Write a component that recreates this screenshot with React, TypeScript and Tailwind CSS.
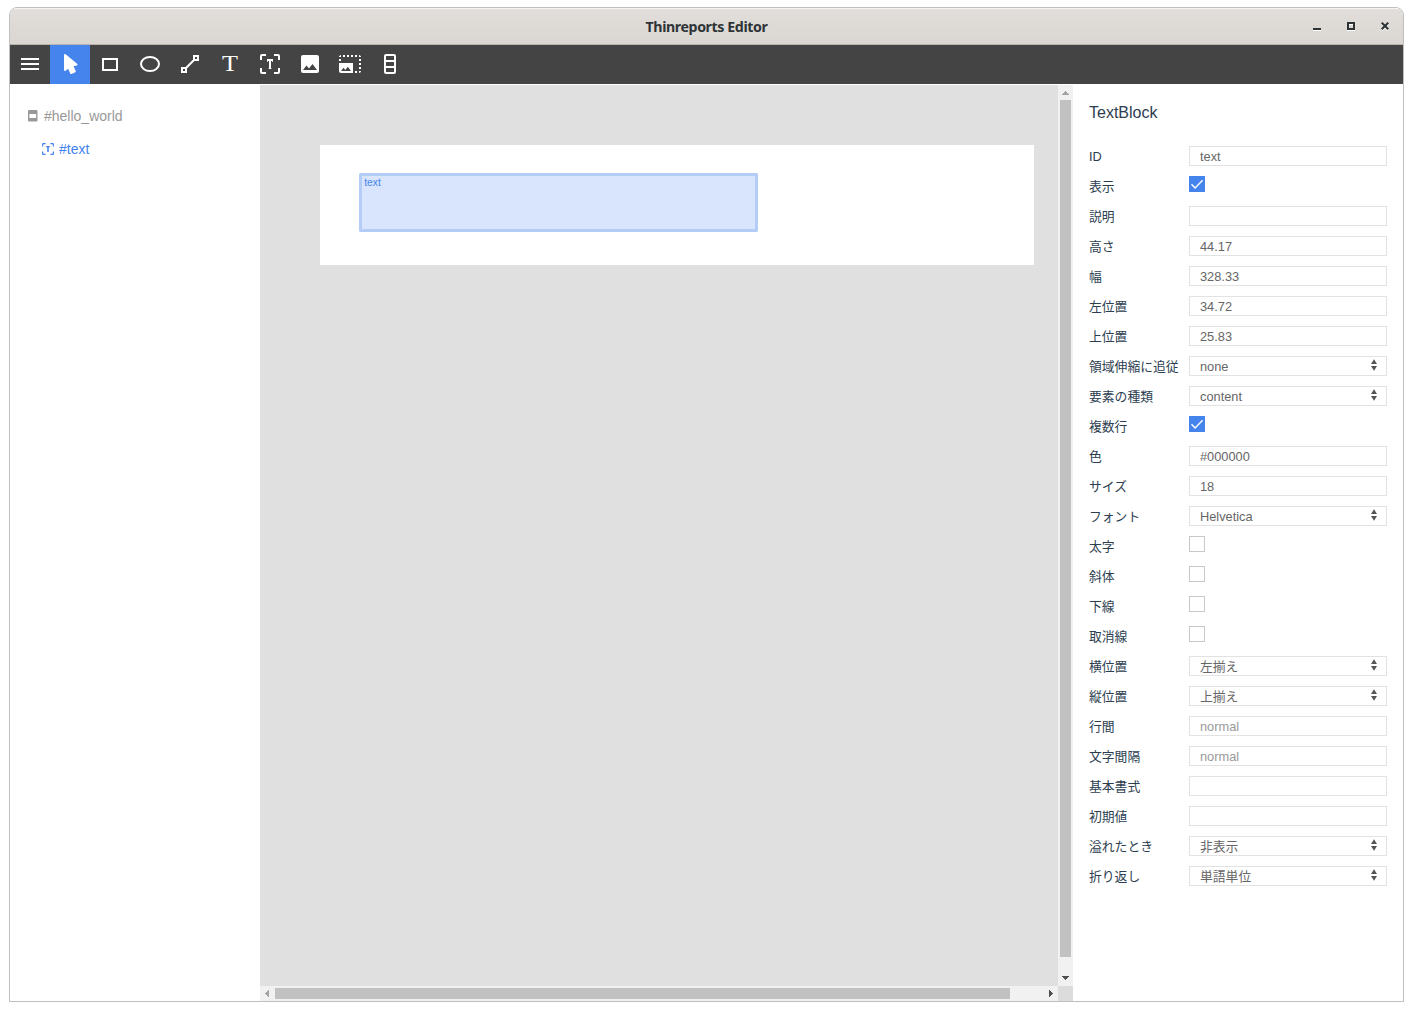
import type { ReactNode } from "react";

type Field = {
  label: string;
  kind: "text" | "select" | "check";
  value?: string;
  placeholder?: string;
  checked?: boolean;
};

const fields: Field[] = [
  { label: "ID", kind: "text", value: "text" },
  { label: "表示", kind: "check", checked: true },
  { label: "説明", kind: "text" },
  { label: "高さ", kind: "text", value: "44.17" },
  { label: "幅", kind: "text", value: "328.33" },
  { label: "左位置", kind: "text", value: "34.72" },
  { label: "上位置", kind: "text", value: "25.83" },
  { label: "領域伸縮に追従", kind: "select", value: "none" },
  { label: "要素の種類", kind: "select", value: "content" },
  { label: "複数行", kind: "check", checked: true },
  { label: "色", kind: "text", value: "#000000" },
  { label: "サイズ", kind: "text", value: "18" },
  { label: "フォント", kind: "select", value: "Helvetica" },
  { label: "太字", kind: "check" },
  { label: "斜体", kind: "check" },
  { label: "下線", kind: "check" },
  { label: "取消線", kind: "check" },
  { label: "横位置", kind: "select", value: "左揃え" },
  { label: "縦位置", kind: "select", value: "上揃え" },
  { label: "行間", kind: "text", placeholder: "normal" },
  { label: "文字間隔", kind: "text", placeholder: "normal" },
  { label: "基本書式", kind: "text" },
  { label: "初期値", kind: "text" },
  { label: "溢れたとき", kind: "select", value: "非表示" },
  { label: "折り返し", kind: "select", value: "単語単位" },
];

function Tool({ active, label, children }: { active?: boolean; label: string; children: ReactNode }) {
  return (
    <button aria-label={label} className={active ? "h-[39px] w-10 bg-[#4484ec]" : "h-[39px] w-10"}>
      <svg width="40" height="39" viewBox="0 0 40 39" fill="none" stroke="none">
        {children}
      </svg>
    </button>
  );
}

function Toolbar() {
  return (
    <div className="flex h-[39px] shrink-0 bg-[#444444]">
      <Tool label="Menu">
        <path fill="#fff" d="M11 13h18v2H11zM11 18h18v2H11zM11 23h18v2H11z" />
      </Tool>
      <Tool label="Select" active>
        <path
          fill="#fff"
          transform="translate(8 7)"
          d="M13.64,21.97C13.14,22.21 12.54,22 12.31,21.5L10.13,16.76L7.62,18.78C7.45,18.92 7.24,19 7,19A1,1 0 0,1 6,18V3A1,1 0 0,1 7,2C7.24,2 7.47,2.09 7.64,2.23L7.65,2.22L19.14,11.86C19.57,12.22 19.62,12.85 19.27,13.27C19.12,13.45 18.91,13.57 18.7,13.61L15.54,14.23L17.74,18.96C18,19.46 17.76,20.05 17.26,20.28L13.64,21.97Z"
        />
      </Tool>
      <Tool label="Rectangle">
        <rect x="13" y="14" width="14" height="11" stroke="#fff" strokeWidth="2" />
      </Tool>
      <Tool label="Ellipse">
        <ellipse cx="20" cy="19" rx="9" ry="7" stroke="#fff" strokeWidth="2" />
      </Tool>
      <Tool label="Line">
        <path stroke="#fff" strokeWidth="2" d="M24 11h4v4h-4zM12 23h4v4h-4zM16 23l8-8" />
      </Tool>
      <Tool label="Text">
        <text
          x="12"
          y="26.3"
          fill="#fff"
          fontFamily="Liberation Serif, serif"
          fontSize="22.6"
          textLength="16"
          lengthAdjust="spacingAndGlyphs"
        >
          T
        </text>
      </Tool>
      <Tool label="Text block">
        <path stroke="#fff" strokeWidth="2" d="M16 10h-4a1 1 0 0 0-1 1v4M24 10h4a1 1 0 0 1 1 1v4M16 28h-4a1 1 0 0 1-1-1v-4M24 28h4a1 1 0 0 0 1-1v-4M17 15h6M20 15v9" />
        <path stroke="#fff" strokeWidth="1" strokeOpacity=".7" d="M17.5 16v1M22.5 16v1M18.5 23.5h3" />
      </Tool>
      <Tool label="Image">
        <path
          fill="#fff"
          transform="translate(8 7)"
          d="M8.5,13.5L11,16.5L14.5,12L19,18H5M21,19V5C21,3.89 20.1,3 19,3H5A2,2 0 0,0 3,5V19A2,2 0 0,0 5,21H19A2,2 0 0,0 21,19Z"
        />
      </Tool>
      <Tool label="Image block">
        <path
          fill="#fff"
          transform="translate(8 7)"
          d="M21,15H23V17H21V15M21,11H23V13H21V11M23,19H21V21C22,21 23,20 23,19M13,3H15V5H13V3M21,7H23V9H21V7M21,3V5H23C23,4 22,3 21,3M1,7H3V9H1V7M17,3H19V5H17V3M17,19H19V21H17V19M3,3C2,3 1,4 1,5H3V3M9,3H11V5H9V3M5,3H7V5H5V3M1,11V19A2,2 0 0,0 3,21H15V11H1M3,19L5.5,15.79L7.29,17.94L9.79,14.72L13,19H3Z"
        />
      </Tool>
      <Tool label="Stack view">
        <path stroke="#fff" strokeWidth="2" d="M16 10h8a1 1 0 0 1 1 1v16a1 1 0 0 1-1 1h-8a1 1 0 0 1-1-1V11a1 1 0 0 1 1-1zM15 16h10M15 22h10" />
      </Tool>
    </div>
  );
}

function TitleBar() {
  return (
    <div className="grid h-[37px] shrink-0 grid-cols-[1fr_auto_1fr] items-center border-t border-b border-t-[#f6f4f3] border-b-[#b9b3ab] bg-linear-to-b from-[#e1dedb] to-[#dad6d1]">
      <span />
      <h1 className="text-[14.2px] leading-5 font-bold tracking-[-0.4px] text-[#2e3436] [font-family:'Noto_Sans',sans-serif]">
        Thinreports Editor
      </h1>
      <div className="flex justify-end gap-[26px] pr-[14px]">
        <svg width="8" height="9" viewBox="0 0 8 9">
          <path fill="#fff" d="M0 8h8v1H0z" />
          <path fill="#2e3436" d="M0 6h8v2H0z" />
        </svg>
        <svg width="8" height="9" viewBox="0 0 8 9" fill="none">
          <path fill="#fff" d="M0 8h8v1H0zM2 2h4v1H2z" />
          <path stroke="#2e3436" strokeWidth="2" d="M1 1h6v6H1z" />
        </svg>
        <svg width="8" height="9" viewBox="0 0 8 9" fill="none">
          <path stroke="#fff" strokeWidth="2" d="M.7 1.7l6.6 6.6M7.3 1.7L.7 8.3" />
          <path stroke="#2e3436" strokeWidth="2.1" d="M.7.7l6.6 6.6M7.3.7L.7 7.3" />
        </svg>
      </div>
    </div>
  );
}

function Tree() {
  return (
    <nav className="flex w-[250px] shrink-0 flex-col bg-white pt-[21px] text-sm">
      <div className="flex h-[22px] items-center pl-[18px] text-[#999999]">
        <svg className="mr-[6px]" width="10" height="12" viewBox="0 0 10 12">
          <path fill="#999" fillRule="evenodd" d="M1 0h7.5a1 1 0 0 1 1 1v9.5a1 1 0 0 1-1 1H1a1 1 0 0 1-1-1V1a1 1 0 0 1 1-1zM1.4 4v4h6.7V4z" />
        </svg>
        <span>#hello_world</span>
      </div>
      <div className="mt-[11px] flex h-[22px] items-center pl-8 text-[#4484ec]">
        <svg className="mr-[5px]" width="12" height="12" viewBox="0 0 20 20" fill="none" stroke="#4484ec" strokeWidth="2">
          <path d="M6 1H2a1 1 0 0 0-1 1v4M14 1h4a1 1 0 0 1 1 1v4M6 19H2a1 1 0 0 1-1-1v-4M14 19h4a1 1 0 0 0 1-1v-4M7 6h6" />
          <path d="M10 6v9" strokeWidth="2.6" />
        </svg>
        <span>#text</span>
      </div>
    </nav>
  );
}

function Canvas() {
  return (
    <main className="grid w-[813px] shrink-0 grid-cols-[798px_15px] grid-rows-[901px_15px] pt-px">
      <div className="bg-[#e0e0e0] pt-[60px] pl-[60px]">
        <div className="h-[120px] w-[714px] bg-white pt-7 pl-[38.7px]">
          <div className="h-[59px] w-[399.6px] rounded-[1.5px] border-3 border-[#b3cdf6] bg-[#d9e5fd] pt-px pl-[2.5px] text-[10.3px] leading-3 text-[#4484ec]">
            text
          </div>
        </div>
      </div>
      <div className="flex flex-col items-center bg-[#f1f1f1]">
        <svg width="15" height="15" viewBox="0 0 15 15" shapeRendering="crispEdges">
          <path fill="#a3a3a3" d="M4 10h7V9h-1V8H9V7H8V6H7v1H6v1H5v1H4z" />
        </svg>
        <div className="h-[857px] w-[11px] bg-[#c1c1c1]" />
        <svg className="mt-auto" width="15" height="15" viewBox="0 0 15 15" shapeRendering="crispEdges">
          <path fill="#505050" d="M4 5h7v1h-1v1H9v1H8v1H7V8H6V7H5V6H4z" />
        </svg>
      </div>
      <div className="flex items-center bg-[#f1f1f1]">
        <svg width="15" height="15" viewBox="0 0 15 15" shapeRendering="crispEdges">
          <path fill="#a3a3a3" d="M9 4v7H8v-1H7V9H6V8H5V7h1V6h1V5h1V4z" />
        </svg>
        <div className="h-[11px] w-[735px] bg-[#c1c1c1]" />
        <svg className="ml-auto" width="15" height="15" viewBox="0 0 15 15" shapeRendering="crispEdges">
          <path fill="#505050" d="M6 4v7h1v-1h1V9h1V8h1V7H9V6H8V5H7V4z" />
        </svg>
      </div>
      <div className="bg-[#dcdcdc]" />
    </main>
  );
}

function Control({ field }: { field: Field }) {
  if (field.kind === "check") {
    return field.checked ? (
      <div className="mt-[5px] size-4 bg-[#4484ec]">
        <svg width="16" height="16" viewBox="0 0 16 16" fill="none">
          <path stroke="#fff" strokeWidth="1.4" d="M2.5 8.2l3.6 3.7L13.6 4.3" />
        </svg>
      </div>
    ) : (
      <div className="mt-[5px] size-4 border border-[#c8c8c8] bg-white" />
    );
  }
  return (
    <div className="mt-[5px] flex h-5 w-[198px] items-center justify-between border border-[#e2e2e2] bg-white pr-[9px] pl-[10px] text-[#666666]">
      <span className={field.placeholder ? "h-5 leading-[21px] text-[#999999]" : "h-5 leading-[21px]"}>
        {field.value ?? field.placeholder}
      </span>
      {field.kind === "select" && (
        <svg className="-mt-[3px]" width="6" height="12" viewBox="0 0 6 12">
          <path fill="#555" d="M3 .3L6 5H0zM3 11.7L0 7h6z" />
        </svg>
      )}
    </div>
  );
}

function Properties() {
  return (
    <aside className="flex flex-1 flex-col bg-white pl-4 text-[#2c3e50]">
      <h2 className="mt-[17px] mb-4 text-base leading-6">TextBlock</h2>
      {fields.map((field) => (
        <div key={field.label} className="flex h-[30px] items-start text-[12.8px]">
          <span className="w-[100px] shrink-0 leading-[31px] whitespace-nowrap">{field.label}</span>
          <Control field={field} />
        </div>
      ))}
    </aside>
  );
}

export default function App() {
  return (
    <div className="h-[1011px] w-[1413px] bg-white pt-[7px] pl-[9px] [font-family:'Liberation_Sans','Noto_Sans_CJK_JP',sans-serif]">
      <div className="flex h-[995px] w-[1395px] flex-col overflow-hidden rounded-t-lg border border-[#bfbfbf]">
        <TitleBar />
        <Toolbar />
        <div className="flex min-h-0 flex-1">
          <Tree />
          <Canvas />
          <Properties />
        </div>
      </div>
    </div>
  );
}
